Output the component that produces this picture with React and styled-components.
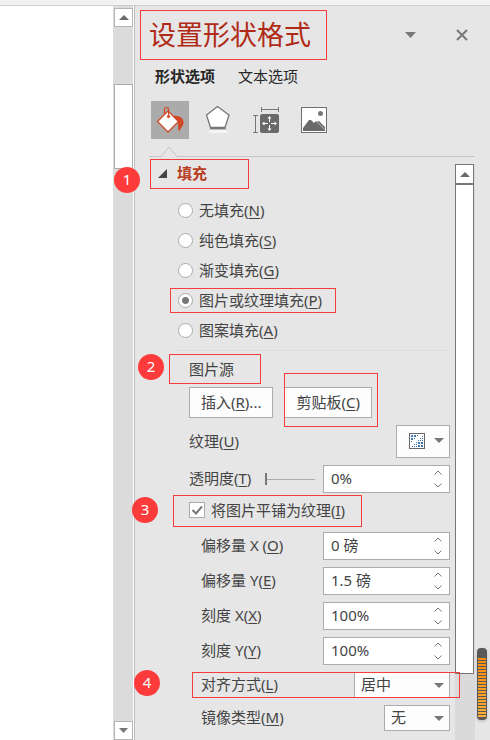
import React, { useState } from "react";
import styled, { createGlobalStyle, css } from "styled-components";

const GlobalStyle = createGlobalStyle`
  *, *::before, *::after { box-sizing: border-box; }
  body { margin: 0; background: #fff; }
  body, button, input, select {
    font-family: "Noto Sans", "Noto Sans CJK SC", sans-serif;
    font-size: 15px;
    line-height: 20px;
    color: #444;
  }
  button, input, select { margin: 0; padding: 0; border-radius: 0; }
  button { cursor: pointer; }
  u { text-decoration-thickness: 1px; text-underline-offset: 2px; }
`;

const Page = styled.div`
  min-height: 100vh;
  display: flex;
  flex-direction: column;
  position: relative;
`;

const Ribbon = styled.header`
  height: 6px;
  background: #f2f2f2;
  border-bottom: 1px solid #cfcfcf;
`;

const Workspace = styled.div`
  flex: 1;
  display: flex;
`;

const Canvas = styled.main`
  flex: 0 0 113px;
  background: #fff;
`;

const DocScroll = styled.div`
  width: 20px;
  padding: 2px 0 0 1px;
  background: #dbdbdb;
  display: flex;
  flex-direction: column;
`;

const DocScrollButton = styled.button`
  width: 19px;
  height: 19px;
  display: grid;
  place-items: center;
  background: #fff;
  border: 1px solid #b5b5b5;
`;

const DocThumb = styled.div`
  width: 19px;
  height: 85px;
  margin-top: 57px;
  margin-bottom: auto;
  background: #fff;
  border: 1px solid #ababab;
`;

const Pane = styled.aside`
  flex: 1;
  min-width: 0;
  margin-left: 1px;
  padding: 4px 15px 0 14px;
  display: flex;
  flex-direction: column;
  background: #e6e6e6;
  border-left: 1px solid #bdbdbd;
`;

const PaneHeader = styled.div`
  height: 50px;
  display: flex;
  align-items: center;
`;

const Title = styled.h1`
  margin: 0 auto 0 0;
  font-size: 27px;
  line-height: 50px;
  font-weight: 400;
  color: #b02b17;
  position: relative;
`;

const HeaderButton = styled.button`
  width: 24px;
  height: 24px;
  margin-left: 28px;
  display: grid;
  place-items: center;
  background: none;
  border: 0;
  & + & { margin-right: 1px; }
`;

const TabList = styled.div`
  display: flex;
  gap: 23px;
  margin-top: 4px;
  padding-left: 6px;
`;

const Tab = styled.button`
  height: 24px;
  background: none;
  border: 0;
  color: #262626;
  font-weight: ${(p) => (p["aria-selected"] ? 700 : 400)};
`;

const Categories = styled.div`
  display: flex;
  gap: 10px;
  margin-top: 13px;
  padding-left: 2px;
`;

const Category = styled.button`
  width: 38px;
  height: 38px;
  background: ${(p) => (p["aria-pressed"] ? "#ababab" : "transparent")};
  border: 0;
  svg { display: block; }
`;

const Divider = styled.div`
  height: 1px;
  margin-top: 17px;
  background: #c6c6c6;
  position: relative;
  svg { position: absolute; left: 11px; bottom: 0; }
`;

const PaneBody = styled.div`
  flex: 1;
  display: flex;
  gap: 5px;
`;

const Form = styled.form`
  flex: 1;
  min-width: 0;
  padding: 2px 0 9px;
`;

const PaneScroll = styled.div`
  width: 20px;
  margin-top: 7px;
  padding-right: 1px;
  background: #dadada;
  display: flex;
  flex-direction: column;
`;

const PaneScrollButton = styled.button`
  width: 19px;
  height: 20px;
  display: grid;
  place-items: center;
  background: #fff;
  border: 1px solid #777;
`;

const PaneThumb = styled.div`
  height: 491px;
  margin-top: -1px;
  background: #fff;
  border: 1px solid #777;
  border-top-width: 2px;
`;

const SectionToggle = styled.button`
  height: 30px;
  padding: 0 0 2px 9px;
  display: flex;
  align-items: center;
  gap: 10px;
  position: relative;
  background: none;
  border: 0;
  color: #b83c21;
  font-weight: 700;
`;

const RadioGroup = styled.div`
  margin-top: 6px;
  padding-left: 29px;
`;

const RadioLabel = styled.label`
  width: fit-content;
  height: 30px;
  display: flex;
  align-items: center;
  gap: 6px;
  position: relative;
`;

const Radio = styled.input`
  appearance: none;
  width: 15px;
  height: 15px;
  background: #fff;
  border: 1px solid #ababab;
  border-radius: 50%;
  &:checked { background: radial-gradient(circle, #777 3px, #fff 4px); }
`;

const Separator = styled.hr`
  height: 1px;
  margin: 5px 0 3px 28px;
  border: 0;
  background: #dedede;
`;

const Options = styled.div`
  padding-left: 40px;
`;

const GroupLabel = styled.div`
  width: fit-content;
  height: 30px;
  display: flex;
  align-items: center;
  position: relative;
`;

const ButtonRow = styled.div`
  display: flex;
  gap: 11px;
  margin: 3px 0 7px;
`;

const PushButton = styled.button`
  height: 31px;
  padding: 0 11px 2px;
  position: relative;
  background: #fdfdfd;
  border: 1px solid #ababab;
`;

const Row = styled.div`
  display: flex;
  align-items: center;
  margin-top: 7px;
  position: relative;
  padding-left: ${(p) => (p.$nested ? "12px" : "0")};
`;

const RowLabel = styled.label`
  margin-right: auto;
  padding-bottom: 2px;
`;

const TextureButton = styled.button`
  width: 54px;
  height: 33px;
  padding: 0 5px 2px 0;
  display: flex;
  align-items: center;
  justify-content: flex-end;
  gap: 9px;
  background: #fdfdfd;
  border: 1px solid #ababab;
`;

const Slider = styled.input`
  appearance: none;
  width: 50px;
  height: 12px;
  margin-right: 8px;
  background: linear-gradient(#ababab, #ababab) center / 100% 1px no-repeat;
  &::-webkit-slider-thumb {
    appearance: none;
    width: 2px;
    height: 12px;
    background: #777;
  }
`;

const SpinBox = styled.div`
  width: 127px;
  height: 28px;
  display: flex;
  background: #fff;
  border: 1px solid #ababab;
`;

const SpinInput = styled.input`
  flex: 1;
  min-width: 0;
  padding: 0 0 2px 7px;
  background: none;
  border: 0;
`;

const Steppers = styled.div`
  width: 22px;
  display: grid;
`;

const StepButton = styled.button`
  display: grid;
  place-items: center;
  background: none;
  border: 0;
`;

const CheckLabel = styled.label`
  width: fit-content;
  height: 32px;
  margin: 2px 0 -2px;
  padding-bottom: 2px;
  display: flex;
  align-items: center;
  gap: 6px;
  position: relative;
`;

const Checkbox = styled.input`
  appearance: none;
  width: 16px;
  height: 16px;
  background: #fff;
  border: 1px solid #ababab;
`;

const CheckField = styled.span`
  display: grid;
  & > * { grid-area: 1 / 1; }
  svg { pointer-events: none; }
`;

const SelectField = styled.span`
  width: ${(p) => p.$width}px;
  display: grid;
  align-items: center;
  & > * { grid-area: 1 / 1; }
  svg { justify-self: end; margin-right: 6px; pointer-events: none; }
`;

const Select = styled.select`
  appearance: none;
  width: 100%;
  height: 26px;
  padding: 0 0 2px 6px;
  background: #fdfdfd;
  border: 1px solid #ababab;
`;

const Mark = styled.span`
  position: absolute;
  pointer-events: none;
  border: 1px solid #f83b3b;
  ${({ $inset }) => css`inset: ${$inset};`}
`;

const Badge = styled.span`
  position: absolute;
  left: ${(p) => p.$left}px;
  top: ${(p) => p.$top}px;
  width: 26px;
  height: 26px;
  border-radius: 50%;
  background: #fd3b3b;
  color: #fff;
  font-size: 15px;
  font-weight: 400;
  line-height: 24px;
  text-align: center;
`;

const Gauge = styled.div`
  position: absolute;
  right: 3px;
  bottom: 20px;
  width: 10px;
  height: 72px;
  padding: 10px 1px 3px;
  border-radius: 4px;
  background: #595959;
  box-shadow: 0 1px 3px #0003;
  &::before {
    content: "";
    display: block;
    height: 100%;
    background:
      repeating-linear-gradient(transparent 0 2px, #595959 2px 3px),
      linear-gradient(#ff8c0a, #ffb03a);
  }
`;

const Down = ({ color = "#777", w = 10, h = 5 }) => (
  <svg width={w} height={h} viewBox="0 0 10 5" preserveAspectRatio="none" aria-hidden="true">
    <path d="M0 0h10L5 5z" fill={color} />
  </svg>
);

const Up = () => (
  <svg width="10" height="5" viewBox="0 0 10 5" aria-hidden="true">
    <path d="M0 5h10L5 0z" fill="#6a6a6a" />
  </svg>
);

const Chevron = ({ down }) => (
  <svg width="8" height="5" viewBox="0 0 8 5" fill="none" stroke="#777" aria-hidden="true">
    <path d={down ? "M.5 .5L4 4L7.5 .5" : "M.5 4.5L4 1L7.5 4.5"} />
  </svg>
);

const BucketIcon = () => (
  <svg width="38" height="38" viewBox="0 0 38 38" aria-hidden="true">
    <path d="M22 15C28 14 33 17 32.500 22C32 26 28.500 28 28 31C26.500 28 27.500 24 27 20Z" fill="#d24726" />
    <path d="M17 10L27.500 20.500L17 31L6.500 20.500Z" fill="#fff" stroke="#d24726" strokeWidth="1.300" />
    <path d="M13.500 14V8.500Q13.500 6.500 15.500 6.500Q17.500 6.500 17.500 8.500V15" fill="none" stroke="#d24726" strokeWidth="1.200" />
    <circle cx="17.500" cy="15.500" r="1.600" fill="#d24726" />
  </svg>
);

const PentagonIcon = () => (
  <svg width="38" height="38" viewBox="0 0 38 38" aria-hidden="true">
    <defs>
      <linearGradient id="reflection" x2="0" y2="1">
        <stop stopColor="#a8a8a8" />
        <stop offset=".35" stopColor="#fff" />
        <stop offset="1" stopColor="#e6e6e6" />
      </linearGradient>
    </defs>
    <path d="M10.500 28H27.500L29 33H9Z" fill="url(#reflection)" />
    <path d="M18.500 5.500L30 14L26 26.500H11.500L7.500 14Z" fill="#fff" stroke="#777" strokeWidth="1.300" />
    <path d="M11 27H26.500" stroke="#777" strokeWidth="2" />
  </svg>
);

const SizeIcon = () => (
  <svg width="38" height="38" viewBox="0 0 38 38" fill="none" aria-hidden="true">
    <path d="M14.500 6v5M31.500 6v5M14.500 8.500h17M6 14.500h5M6 31.500h5M8.500 14.500v17" stroke="#777" />
    <rect x="13" y="13" width="19" height="19" rx="2" fill="#696969" />
    <path d="M16 22.500h5M24 22.500h5M22.500 16v5M22.500 24v5" stroke="#fff" />
    <path d="M15 22.500l2.500-2v4zM30 22.500l-2.500-2v4zM22.500 15l-2 2.500h4zM22.500 30l-2-2.500h4z" fill="#fff" />
  </svg>
);

const PictureIcon = () => (
  <svg width="38" height="38" viewBox="0 0 38 38" aria-hidden="true">
    <rect x="6.500" y="6.500" width="25" height="25" fill="#fff" stroke="#6f6f6f" />
    <circle cx="25.500" cy="12.500" r="2.500" fill="#777" />
    <path d="M8 30V27L14 19H16L27 30ZM19 22L21 20L30 29V30H27ZM22 20.500L24 20L30 26V28.500Z" fill="#696969" />
  </svg>
);

const TextureIcon = () => (
  <svg width="16" height="16" viewBox="0 0 16 16" aria-hidden="true">
    <rect x=".5" y=".5" width="15" height="15" fill="#fff" stroke="#666" />
    <path
      d="M2 2h2v2H2zM5 2h2v2H5zM2 5h2v2H2zM8 2h1v1H8zM5 5h1v1H5zM2 8h1v1H2zM13 3h1v1h-1zM11 5h1v1h-1zM13 5h1v1h-1zM9 7h1v1H9zM11 7h1v1h-1zM13 7h1v1h-1zM7 9h1v1H7zM9 9h2v2H9zM12 9h2v2h-2zM5 11h1v1H5zM7 11h1v1H7zM9 12h2v2H9zM12 12h2v2h-2zM3 13h1v1H3zM5 13h1v1H5zM7 13h1v1H7z"
      fill="#3f78b5"
    />
  </svg>
);

const CATEGORIES = [
  ["填充与线条", BucketIcon],
  ["效果", PentagonIcon],
  ["大小与属性", SizeIcon],
  ["图片", PictureIcon],
];

const FILLS = [
  ["无填充", "N"],
  ["纯色填充", "S"],
  ["渐变填充", "G"],
  ["图片或纹理填充", "P"],
  ["图案填充", "A"],
];

const OFFSETS = [
  ["偏移量 X (", "O", "0 磅"],
  ["偏移量 Y(", "E", "1.5 磅"],
  ["刻度 X(", "X", "100%"],
  ["刻度 Y(", "Y", "100%"],
];

function Spinner({ id, initial }) {
  const [value, setValue] = useState(initial);
  const step = (by) =>
    setValue((v) => v.replace(/^-?[\d.]+/, (n) => String(Number(n) + by)));
  return (
    <SpinBox>
      <SpinInput id={id} value={value} onChange={(e) => setValue(e.target.value)} />
      <Steppers>
        <StepButton type="button" aria-label="增加" onClick={() => step(1)}><Chevron /></StepButton>
        <StepButton type="button" aria-label="减少" onClick={() => step(-1)}><Chevron down /></StepButton>
      </Steppers>
    </SpinBox>
  );
}

export default function App() {
  const [fill, setFill] = useState("P");
  const [category, setCategory] = useState(0);
  return (
    <Page>
      <GlobalStyle />
      <Ribbon />
      <Workspace>
        <Canvas />
        <DocScroll>
          <DocScrollButton aria-label="向上滚动"><Up /></DocScrollButton>
          <DocThumb />
          <DocScrollButton aria-label="向下滚动"><Down w={9} /></DocScrollButton>
        </DocScroll>
        <Pane>
          <PaneHeader>
            <Title>
              设置形状格式
              <Mark $inset="0 -16px 0 -9px" />
            </Title>
            <HeaderButton aria-label="任务窗格选项"><Down w={11} h={6} /></HeaderButton>
            <HeaderButton aria-label="关闭">
              <svg width="12" height="12" viewBox="0 0 12 12" aria-hidden="true">
                <path d="M1 1L11 11M11 1L1 11" stroke="#777" strokeWidth="2" />
              </svg>
            </HeaderButton>
          </PaneHeader>
          <TabList role="tablist">
            <Tab role="tab" aria-selected={true}>形状选项</Tab>
            <Tab role="tab" aria-selected={false}>文本选项</Tab>
          </TabList>
          <Categories>
            {CATEGORIES.map(([name, Icon], i) => (
              <Category key={name} aria-label={name} aria-pressed={i === category} onClick={() => setCategory(i)}>
                <Icon />
              </Category>
            ))}
          </Categories>
          <Divider>
            <svg width="18" height="11" viewBox="0 0 18 11" aria-hidden="true">
              <path d="M0 10.500H1L9 1L17 10.500H18" fill="#e6e6e6" stroke="#c6c6c6" />
              <path d="M2 10.500H16" stroke="#e6e6e6" />
            </svg>
          </Divider>
          <PaneBody>
            <Form onSubmit={(e) => e.preventDefault()}>
              <SectionToggle type="button" aria-expanded="true">
                <svg width="9" height="9" viewBox="0 0 9 9" aria-hidden="true">
                  <path d="M9 0V9H0z" fill="#444" />
                </svg>
                填充
                <Mark $inset="0 -42px 0 1px" />
                <Badge $left={-35} $top={8}>1</Badge>
              </SectionToggle>
              <RadioGroup role="radiogroup" aria-label="填充">
                {FILLS.map(([name, key]) => (
                  <RadioLabel key={key}>
                    <Radio type="radio" name="fill" checked={fill === key} onChange={() => setFill(key)} />
                    <span>{name}(<u>{key}</u>)</span>
                    {key === "P" && <Mark $inset="3px -14px 2px -8px" />}
                  </RadioLabel>
                ))}
              </RadioGroup>
              <Separator />
              <Options>
                <GroupLabel>
                  图片源
                  <Mark $inset="0 -27px 0 -20px" />
                  <Badge $left={-51} $top={0}>2</Badge>
                </GroupLabel>
                <ButtonRow>
                  <PushButton type="button">插入(<u>R</u>)...</PushButton>
                  <PushButton type="button">
                    剪贴板(<u>C</u>)
                    <Mark $inset="-15px -7px -10px -1px" />
                  </PushButton>
                </ButtonRow>
                <Row>
                  <RowLabel htmlFor="texture">纹理(<u>U</u>)</RowLabel>
                  <TextureButton type="button" id="texture"><TextureIcon /><Down /></TextureButton>
                </Row>
                <Row>
                  <RowLabel htmlFor="transparency">透明度(<u>T</u>)</RowLabel>
                  <Slider type="range" defaultValue={0} aria-label="透明度" />
                  <Spinner id="transparency" initial="0%" />
                </Row>
                <CheckLabel>
                  <CheckField>
                    <Checkbox type="checkbox" defaultChecked />
                    <svg width="16" height="16" viewBox="0 0 16 16" aria-hidden="true">
                      <path d="M3.500 8L7 11.500L13 4.500" fill="none" stroke="#777" strokeWidth="2" />
                    </svg>
                  </CheckField>
                  <span>将图片平铺为纹理(<u>I</u>)</span>
                  <Mark $inset="0 -17px 0 -16px" />
                  <Badge $left={-57} $top={2}>3</Badge>
                </CheckLabel>
                {OFFSETS.map(([name, key, value]) => (
                  <Row key={key} $nested>
                    <RowLabel htmlFor={`field-${key}`}>{name}<u>{key}</u>)</RowLabel>
                    <Spinner id={`field-${key}`} initial={value} />
                  </Row>
                ))}
                <Row $nested>
                  <RowLabel htmlFor="align">对齐方式(<u>L</u>)</RowLabel>
                  <SelectField $width={96}>
                    <Select id="align"><option>居中</option></Select>
                    <Down />
                  </SelectField>
                  <Mark $inset="0 -10px 0 3px" />
                  <Badge $left={-55} $top={-2}>4</Badge>
                </Row>
                <Row $nested>
                  <RowLabel htmlFor="mirror">镜像类型(<u>M</u>)</RowLabel>
                  <SelectField $width={66}>
                    <Select id="mirror"><option>无</option></Select>
                    <Down />
                  </SelectField>
                </Row>
              </Options>
            </Form>
            <PaneScroll>
              <PaneScrollButton aria-label="向上滚动"><Up /></PaneScrollButton>
              <PaneThumb />
            </PaneScroll>
          </PaneBody>
        </Pane>
      </Workspace>
      <Gauge />
    </Page>
  );
}
